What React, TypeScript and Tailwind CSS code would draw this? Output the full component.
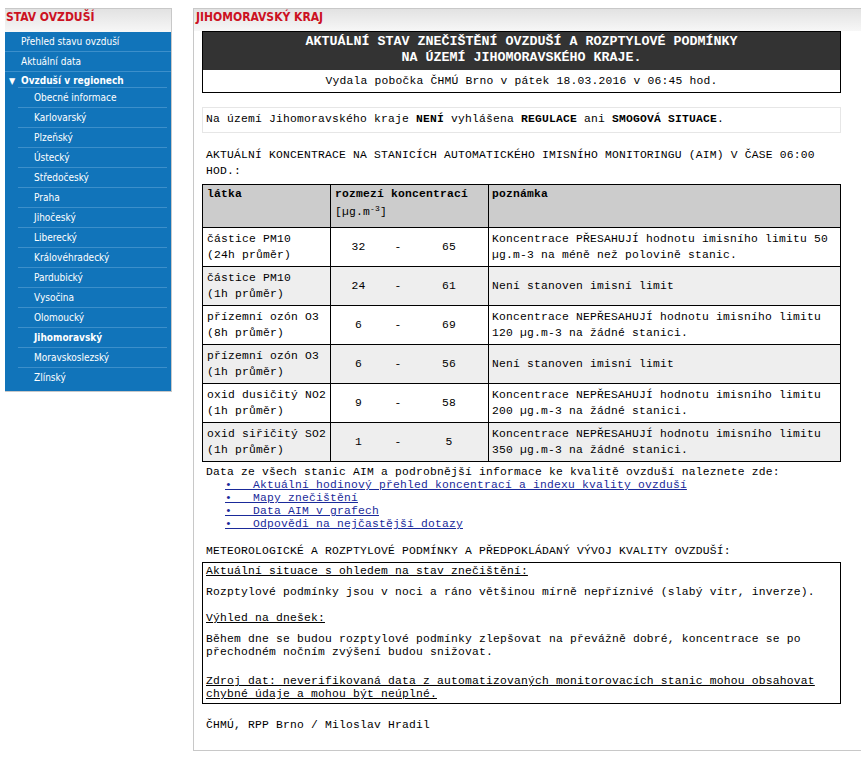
import React from 'react';

const regions = [
  'Obecné informace',
  'Karlovarský',
  'Plzeňský',
  'Ústecký',
  'Středočeský',
  'Praha',
  'Jihočeský',
  'Liberecký',
  'Královéhradecký',
  'Pardubický',
  'Vysočina',
  'Olomoucký',
  'Jihomoravský',
  'Moravskoslezský',
  'Zlínský',
];

const rows = [
  { name: 'částice PM10', avg: '(24h průměr)', min: '32', max: '65', note: ['Koncentrace PŘESAHUJÍ hodnotu imisního limitu 50', 'µg.m-3 na méně než polovině stanic.'] },
  { name: 'částice PM10', avg: '(1h průměr)', min: '24', max: '61', note: ['Není stanoven imisní limit'] },
  { name: 'přízemní ozón O3', avg: '(8h průměr)', min: '6', max: '69', note: ['Koncentrace NEPŘESAHUJÍ hodnotu imisního limitu', '120 µg.m-3 na žádné stanici.'] },
  { name: 'přízemní ozón O3', avg: '(1h průměr)', min: '6', max: '56', note: ['Není stanoven imisní limit'] },
  { name: 'oxid dusičitý NO2', avg: '(1h průměr)', min: '9', max: '58', note: ['Koncentrace NEPŘESAHUJÍ hodnotu imisního limitu', '200 µg.m-3 na žádné stanici.'] },
  { name: 'oxid siřičitý SO2', avg: '(1h průměr)', min: '1', max: '5', note: ['Koncentrace NEPŘESAHUJÍ hodnotu imisního limitu', '350 µg.m-3 na žádné stanici.'] },
];

const links = [
  'Aktuální hodinový přehled koncentrací a indexu kvality ovzduší',
  'Mapy znečištění',
  'Data AIM v grafech',
  'Odpovědi na nejčastější dotazy',
];

const Sidebar = () => (
  <aside className="w-[167px] shrink-0 self-start border-t border-r border-b border-[#c8c8c8] font-['DejaVu_Sans_Condensed','DejaVu_Sans',sans-serif]">
    <div className="h-[23px] bg-linear-to-b from-[#e2e2e2] to-[#f7f7f7] pl-[1px] text-[12px] font-bold leading-[16px] text-[#cc1122]">
      STAV OVZDUŠÍ
    </div>
    <div className="bg-[#1174ba] pb-[3px] text-[10px] text-white">
      <div className="h-5 border-b border-[#3c8fcb] pl-4 leading-[19px]">Přehled stavu ovzduší</div>
      <div className="h-5 border-b border-[#3c8fcb] pl-4 leading-[19px]">Aktuální data</div>
      <div className="ml-[13px] mr-[4px] h-4 border-b border-[#3c8fcb] pl-[3px] pt-[2px] leading-[13px] font-bold">
        <span className="-ml-[12px] inline-block w-[12px] text-[9px]">▼</span>Ovzduší v regionech
      </div>
      {regions.map((r, i) => (
        <div
          key={r}
          className={`ml-[13px] mr-[4px] h-5 pl-4 leading-[19px] ${i < regions.length - 1 ? 'border-b border-[#3c8fcb]' : ''} ${r === 'Jihomoravský' ? 'font-bold' : ''}`}
        >
          {r}
        </div>
      ))}
    </div>
  </aside>
);

const Sup = () => <sup className="text-[8px]">-3</sup>;

const App: React.FC = () => {
  return (
    <div className="flex min-h-[760px] bg-white pl-[5px] pt-[8px]">
      <Sidebar />

      <main className="ml-[21px] h-[743px] flex-1 border-t border-b border-l border-[#c8c8c8]">
        <div className="h-[22px] bg-linear-to-b from-[#e2e2e2] to-[#f7f7f7] pl-[2px] font-['DejaVu_Sans_Condensed','DejaVu_Sans',sans-serif] text-[12px] font-bold leading-[16px] text-[#cc1122]">
          JIHOMORAVSKÝ KRAJ
        </div>

        <div className="pl-[8px] font-['Liberation_Mono','Courier_New',monospace] text-[11.33px] tracking-[0.2px] text-black">
          {/* title box */}
          <div className="w-[639px] border border-black">
            <div className="h-[38px] bg-[#333333] pt-[2px] text-center text-[13.33px] font-bold leading-4 tracking-normal text-white">
              AKTUÁLNÍ STAV ZNEČIŠTĚNÍ OVZDUŠÍ A ROZPTYLOVÉ PODMÍNKY
              <br />
              NA ÚZEMÍ JIHOMORAVSKÉHO KRAJE.
            </div>
            <div className="h-[22px] pt-[3px] text-center leading-4">
              Vydala pobočka ČHMÚ Brno v pátek 18.03.2016 v 06:45 hod.
            </div>
          </div>

          <div className="mt-[14px] h-[26px] w-[639px] border border-[#e6e6e6] pl-[3px] pt-[3px] leading-4">
            Na území Jihomoravského kraje <b>NENÍ</b> vyhlášena <b>REGULACE</b> ani <b>SMOGOVÁ SITUACE</b>.
          </div>

          <div className="mt-[14px] w-[639px] pl-[4px] leading-4">
            AKTUÁLNÍ KONCENTRACE NA STANICÍCH AUTOMATICKÉHO IMISNÍHO MONITORINGU (AIM) V ČASE 06:00 HOD.:
          </div>

          <table className="mt-[5px] w-[639px] table-fixed border-collapse leading-4">
            <colgroup>
              <col className="w-[128px]" />
              <col className="w-[158px]" />
              <col />
            </colgroup>
            <thead>
              <tr className="h-[43px] bg-[#cccccc]">
                <th className="border border-black px-[4px] pt-[1px] text-left align-top font-bold">látka</th>
                <th className="border border-black px-[4px] pt-[1px] text-left align-top font-bold">
                  <div>rozmezí koncentrací</div>
                  <div className="font-normal leading-[20px]">
                    [µg.m<Sup />]
                  </div>
                </th>
                <th className="border border-black px-[3px] pt-[1px] text-left align-top font-bold">poznámka</th>
              </tr>
            </thead>
            <tbody>
              {rows.map((r, i) => (
                <tr key={i} className={i % 2 === 1 ? 'bg-[#eeeeee]' : 'bg-white'}>
                  <td className="h-[39px] border border-black px-[4px] py-[3px] align-middle">
                    {r.name}
                    <br />
                    {r.avg}
                  </td>
                  <td className="border border-black p-0 align-middle">
                    <div className="flex">
                      <span className="w-[55px] text-center">{r.min}</span>
                      <span className="w-[24px] text-center">-</span>
                      <span className="flex-1 text-center">{r.max}</span>
                    </div>
                  </td>
                  <td className="border border-black px-[3px] py-[3px] align-middle">
                    {r.note.map((n, j) => (
                      <div key={j}>{n}</div>
                    ))}
                  </td>
                </tr>
              ))}
            </tbody>
          </table>

          <div className="mt-[4px] pl-[4px] leading-[13px]">
            <div>Data ze všech stanic AIM a podrobnější informace ke kvalitě ovzduší naleznete zde:</div>
            {links.map((l) => (
              <div key={l} className="ml-[19px]">
                <a href="#" className="text-[#1a2a9a] underline">
                  •{'\u00a0\u00a0\u00a0'}
                  {l}
                </a>
              </div>
            ))}
          </div>

          <div className="mt-[12px] pl-[4px] leading-4">
            METEOROLOGICKÉ A ROZPTYLOVÉ PODMÍNKY A PŘEDPOKLÁDANÝ VÝVOJ KVALITY OVZDUŠÍ:
          </div>

          <div className="mt-[3px] w-[639px] border border-black pb-[2px] pl-[3px] pt-[2px] leading-[13px]">
            <div className="underline">Aktuální situace s ohledem na stav znečištění:</div>
            <div className="mt-[8px]">
              Rozptylové podmínky jsou v noci a ráno většinou mírně nepříznivé (slabý vítr, inverze).
            </div>
            <div className="mt-[13px] underline">Výhled na dnešek:</div>
            <div className="mt-[8px]">
              Během dne se budou rozptylové podmínky zlepšovat na převážně dobré, koncentrace se po
              <br />
              přechodném nočním zvýšení budou snižovat.
            </div>
            <div className="mt-[16px] underline">
              Zdroj dat: neverifikovaná data z automatizovaných monitorovacích stanic mohou obsahovat
              <br />
              chybné údaje a mohou být neúplné.
            </div>
          </div>

          <div className="mt-[13px] pl-[4px] leading-4">ČHMÚ, RPP Brno / Miloslav Hradil</div>
        </div>
      </main>
    </div>
  );
};

export default App;
